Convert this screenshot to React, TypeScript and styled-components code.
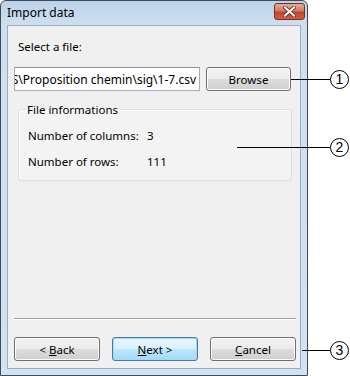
import styled, { createGlobalStyle } from "styled-components";

const GlobalStyle = createGlobalStyle`
  html, body {
    margin: 0;
    padding: 0;
    background: #ffffff;
  }
  body {
    font-family: "Noto Sans", "Open Sans", sans-serif;
    font-size: 11.5px;
    color: #000000;
  }
`;

const Page = styled.div`
  position: relative;
  width: 350px;
  height: 376px;
  overflow: hidden;
`;

const Window = styled.div`
  box-sizing: border-box;
  width: 308px;
  height: 376px;
  border: 1px solid #3d4a57;
  border-radius: 6px 6px 0 0;
  background: linear-gradient(#bcd2e9, #cfdff0 25px, #d3e2f1);
  display: flex;
  flex-direction: column;
  padding: 0 6px 6px 6px;
`;

const TitleBar = styled.div`
  height: 24px;
  display: flex;
  align-items: center;
  justify-content: space-between;
  margin-right: -4px;
`;

const Title = styled.span`
  font-size: 12px;
  color: #000;
  margin-top: -1px;
`;

const CloseButton = styled.div`
  box-sizing: border-box;
  width: 31px;
  height: 17px;
  margin-top: -4px;
  border: 1px solid #7a2e26;
  border-radius: 3px;
  background: linear-gradient(#e6ab9c, #d57a66 45%, #c2452f 55%, #cc5e45);
  display: flex;
  align-items: center;
  justify-content: center;
`;

const Client = styled.div`
  flex: 1;
  box-sizing: border-box;
  background: #f0f0f0;
  border: 1px solid #99adc2;
  padding: 12px 4px 6px 6px;
  display: flex;
  flex-direction: column;
`;

const Label = styled.div`
  padding-left: 4px;
  height: 17px;
  line-height: 17px;
`;

const FileRow = styled.div`
  margin-top: 12px;
  display: flex;
  align-items: center;
  gap: 6px;
`;

const PathInput = styled.div`
  box-sizing: border-box;
  width: 186px;
  height: 24px;
  background: #fff;
  border: 1px solid #abadb3;
  border-top-color: #8e9096;
  display: flex;
  justify-content: flex-end;
  align-items: center;
  overflow: hidden;
  white-space: nowrap;
  padding-right: 3px;
  font-size: 12px;
`;

const Button = styled.div<{ $primary?: boolean; $w?: number }>`
  box-sizing: border-box;
  width: ${(p) => p.$w ?? 86}px;
  height: 24px;
  border: 1px solid ${(p) => (p.$primary ? "#3c7fb1" : "#707070")};
  border-radius: 3px;
  box-shadow: inset 0 0 0 1px ${(p) => (p.$primary ? "#a6d8f6" : "#fcfcfc")};
  background: ${(p) =>
    p.$primary
      ? "linear-gradient(#eaf6fd, #d9f0fc 50%, #bee6fd 50%, #a7d9f5)"
      : "linear-gradient(#f2f2f2, #ebebeb 50%, #dddddd 50%, #cfcfcf)"};
  display: flex;
  align-items: center;
  justify-content: center;
`;

const GroupBox = styled.fieldset`
  margin: 11px 0 0 4px;
  width: 274px;
  box-sizing: border-box;
  height: 79px;
  border: 1px solid #d5dfe5;
  border-radius: 3px;
  padding: 10px 0 0 9px;
  background: #f3f3f3;
  box-shadow: inset 1px 1px 0 #fff;
  display: grid;
  grid-template-columns: 119px auto;
  align-content: start;
  row-gap: 9px;
`;

const Legend = styled.legend`
  padding: 0 2px;
  margin-left: -3px;
`;

const Cell = styled.span`
  height: 17px;
  line-height: 17px;
`;

const Spacer = styled.div`
  flex: 1;
`;

const Separator = styled.div`
  height: 0;
  border-top: 1px solid #a0a0a0;
  border-bottom: 1px solid #ffffff;
  margin-bottom: 17px;
`;

const ButtonRow = styled.div`
  display: flex;
  gap: 12px;
  margin-bottom: 1px;
`;

const Callout = styled.div<{ $top: number; $left: number }>`
  position: absolute;
  top: ${(p) => p.$top - 10}px;
  left: ${(p) => p.$left}px;
  right: 1px;
  height: 20px;
  display: flex;
  align-items: center;
`;

const CalloutLine = styled.div`
  flex: 1;
  height: 1px;
  background: #000;
`;

const CalloutBadge = styled.div`
  box-sizing: border-box;
  width: 19px;
  height: 19px;
  border: 1px solid #000;
  border-radius: 50%;
  display: flex;
  align-items: center;
  justify-content: center;
  font-family: "Liberation Sans", Arial, sans-serif;
  font-size: 14px;
  line-height: 1;
`;

export default function App() {
  return (
    <>
      <GlobalStyle />
      <Page>
        <Window>
          <TitleBar>
            <Title>Import data</Title>
            <CloseButton>
              <svg width="13" height="11" viewBox="0 0 13 11">
                <path
                  d="M2 1.5 L11 9.5 M11 1.5 L2 9.5"
                  stroke="#5a1a12"
                  strokeWidth="3.6"
                  strokeLinecap="square"
                />
                <path
                  d="M2 1.5 L11 9.5 M11 1.5 L2 9.5"
                  stroke="#ffffff"
                  strokeWidth="2.2"
                  strokeLinecap="square"
                />
              </svg>
            </CloseButton>
          </TitleBar>
          <Client>
            <Label>Select a file:</Label>
            <FileRow>
              <PathInput>S\Proposition chemin\sig\1-7.csv</PathInput>
              <Button $w={85}>Browse</Button>
            </FileRow>
            <GroupBox>
              <Legend>File informations</Legend>
              <Cell>Number of columns:</Cell>
              <Cell>3</Cell>
              <Cell>Number of rows:</Cell>
              <Cell>111</Cell>
            </GroupBox>
            <Spacer />
            <Separator />
            <ButtonRow>
              <Button>
                <span>
                  &lt; <u>B</u>ack
                </span>
              </Button>
              <Button $primary>
                <span>
                  <u>N</u>ext &gt;
                </span>
              </Button>
              <Button>
                <span>
                  <u>C</u>ancel
                </span>
              </Button>
            </ButtonRow>
          </Client>
        </Window>
        <Callout $top={79} $left={291}>
          <CalloutLine />
          <CalloutBadge>1</CalloutBadge>
        </Callout>
        <Callout $top={147} $left={237}>
          <CalloutLine />
          <CalloutBadge>2</CalloutBadge>
        </Callout>
        <Callout $top={350} $left={302}>
          <CalloutLine />
          <CalloutBadge>3</CalloutBadge>
        </Callout>
      </Page>
    </>
  );
}
